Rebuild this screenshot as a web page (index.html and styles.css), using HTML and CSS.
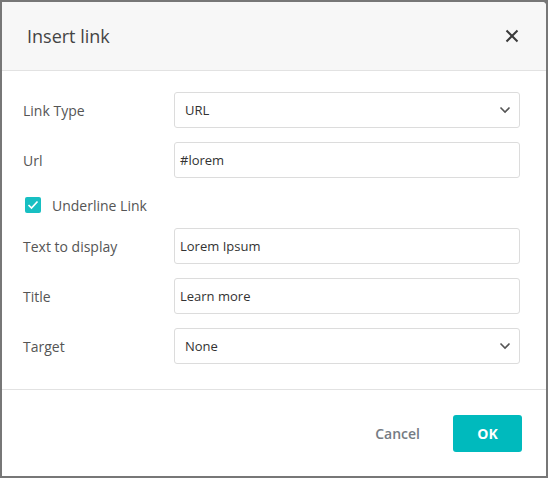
FILE: index.html
```html
<!DOCTYPE html>
<html>
<head>
<meta charset="utf-8">
<link rel="stylesheet" href="styles.css">
</head>
<body>
<div class="dialog">
  <div class="header">
    <span class="title">Insert link</span>
    <button class="close" aria-label="Close">
      <svg width="14" height="14" viewBox="0 0 14 14"><path d="M1.5 1.5 L12.5 12.5 M12.5 1.5 L1.5 12.5" stroke="#3a3a3a" stroke-width="2" stroke-linecap="butt"/></svg>
    </button>
  </div>
  <div class="body">
    <label class="label">Link Type</label>
    <div class="field select"><span>URL</span><svg class="chev" width="12" height="8" viewBox="0 0 12 8"><path d="M1.5 1.5 L6 6 L10.5 1.5" fill="none" stroke="#555" stroke-width="1.6"/></svg></div>

    <label class="label">Url</label>
    <div class="field"><span>#lorem</span></div>

    <div class="check-row">
      <span class="checkbox"><svg width="12" height="10" viewBox="0 0 12 10"><path d="M1.5 5 L4.5 8 L10.5 1.5" fill="none" stroke="#fff" stroke-width="1.7"/></svg></span>
      <span class="check-label">Underline Link</span>
    </div>

    <label class="label">Text to display</label>
    <div class="field"><span>Lorem Ipsum</span></div>

    <label class="label">Title</label>
    <div class="field"><span>Learn more</span></div>

    <label class="label">Target</label>
    <div class="field select"><span>None</span><svg class="chev" width="12" height="8" viewBox="0 0 12 8"><path d="M1.5 1.5 L6 6 L10.5 1.5" fill="none" stroke="#555" stroke-width="1.6"/></svg></div>
  </div>
  <div class="footer">
    <button class="btn cancel">Cancel</button>
    <button class="btn ok">OK</button>
  </div>
</div>
</body>
</html>
```

FILE: styles.css
```css
* { box-sizing: border-box; }
html, body { margin: 0; padding: 0; }
body {
  background: #777;
  width: 548px;
  height: 478px;
  padding: 2px 2px 2px 2px;
  font-family: "Open Sans", "Liberation Sans", sans-serif;
}
.dialog {
  width: 544px;
  height: 474px;
  background: #fff;
  border-radius: 0 4px 0 0;
  display: flex;
  flex-direction: column;
  overflow: hidden;
}
.header {
  height: 69px;
  flex: none;
  background: #f7f7f7;
  border-bottom: 1px solid #e2e2e2;
  display: flex;
  align-items: center;
  justify-content: space-between;
  padding: 0 27px 0 25px;
}
.title {
  font-size: 18px;
  color: #444;
  margin-top: -1px;
}
.close {
  background: none;
  border: 0;
  padding: 0;
  width: 14px;
  height: 14px;
  display: flex;
  cursor: pointer;
}
.body {
  flex: none;
  display: grid;
  grid-template-columns: 151px 346px;
  grid-template-rows: 36px 36px 22px 36px 36px 36px;
  row-gap: 14px;
  align-items: center;
  align-content: start;
  padding: 21px 26px 0 21px;
  height: 319px;
  border-bottom: 1px solid #e2e2e2;
}
.label {
  font-size: 14px;
  color: #555;
}
.field {
  height: 36px;
  border: 1px solid #dcdcdc;
  border-radius: 3px;
  display: flex;
  align-items: center;
  padding: 0 5px;
  font-size: 13px;
  color: #333;
}
.field.select {
  padding: 0 8px 0 10px;
  justify-content: space-between;
}
.chev { display: block; }
.check-row {
  grid-column: 1 / 3;
  display: flex;
  align-items: center;
  height: 22px;
  padding: 4px 0 0 2px;
}
.checkbox {
  width: 16px;
  height: 16px;
  background: #17bfc2;
  border-radius: 2px;
  display: flex;
  align-items: center;
  justify-content: center;
  margin-right: 11px;
}
.check-label {
  font-size: 14px;
  color: #555;
}
.footer {
  flex: 1;
  display: flex;
  justify-content: flex-end;
  align-items: center;
  padding: 0 24px 0 0;
  gap: 33px;
}
.btn {
  font-family: "Open Sans", "Liberation Sans", sans-serif;
  font-size: 14px;
  border: 0;
  cursor: pointer;
}
.cancel {
  background: none;
  color: #757b83;
  font-weight: 600;
  padding: 0;
}
.ok {
  background: #00babd;
  color: #fff;
  font-weight: 700;
  width: 69px;
  height: 37px;
  border-radius: 3px;
}
```
